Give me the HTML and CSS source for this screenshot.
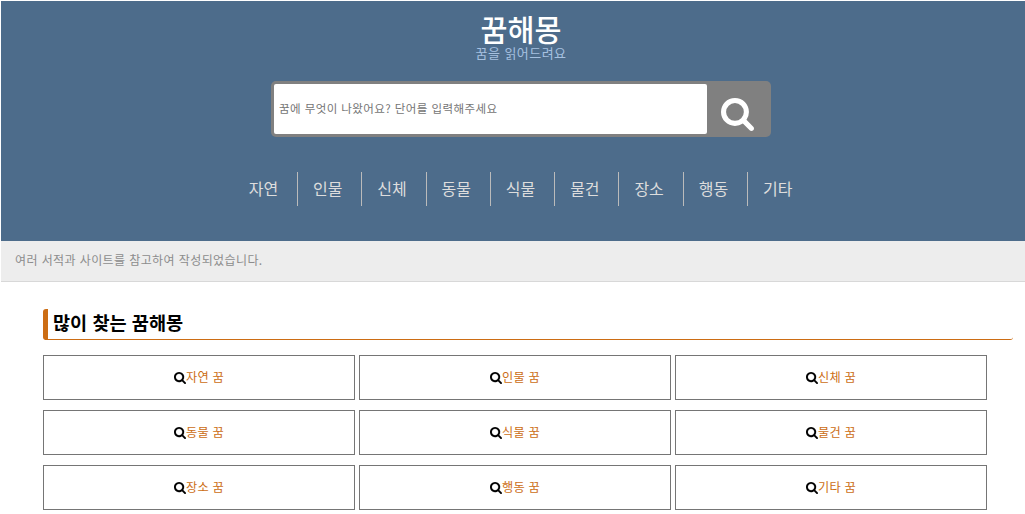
FILE: index.html
```html
<!DOCTYPE html>
<html lang="ko">
<head>
<meta charset="utf-8">
<title>꿈해몽</title>
<link rel="stylesheet" href="styles.css">
</head>
<body>
<svg class="sprite" aria-hidden="true">
  <symbol id="search" viewBox="0 128 1664 1664" overflow="visible"><path d="M1152 832q0-185-131.5-316.5T704 384 387.5 515.5 256 832t131.5 316.5T704 1280t316.5-131.5T1152 832zm512 832q0 52-38 90t-90 38q-54 0-90-38l-343-342q-179 124-399 124-143 0-273.5-55.5t-225-150-150-225T0 832t55.5-273.5 150-225 225-150T704 128t273.5 55.5 225 150 150 225T1408 832q0 220-124 399l343 343q37 37 37 90z"/></symbol>
</svg>
<header class="header">
  <h1 class="title">꿈해몽</h1>
  <p class="subtitle">꿈을 읽어드려요</p>
  <form class="search">
    <input class="search-input" type="text" placeholder="꿈에 무엇이 나왔어요? 단어를 입력해주세요">
    <button class="search-button" type="button" aria-label="검색"><svg class="search-icon"><use href="#search"/></svg></button>
  </form>
  <nav class="nav">
    <a class="nav-item">자연</a>
    <a class="nav-item">인물</a>
    <a class="nav-item">신체</a>
    <a class="nav-item">동물</a>
    <a class="nav-item">식물</a>
    <a class="nav-item">물건</a>
    <a class="nav-item">장소</a>
    <a class="nav-item">행동</a>
    <a class="nav-item">기타</a>
  </nav>
</header>
<p class="notice">여러 서적과 사이트를 참고하여 작성되었습니다.</p>
<main class="main">
  <h2 class="heading">많이 찾는 꿈해몽</h2>
  <div class="cards">
    <a class="card"><svg class="card-icon"><use href="#search"/></svg><span>자연 꿈</span></a>
    <a class="card"><svg class="card-icon"><use href="#search"/></svg><span>인물 꿈</span></a>
    <a class="card"><svg class="card-icon"><use href="#search"/></svg><span>신체 꿈</span></a>
    <a class="card"><svg class="card-icon"><use href="#search"/></svg><span>동물 꿈</span></a>
    <a class="card"><svg class="card-icon"><use href="#search"/></svg><span>식물 꿈</span></a>
    <a class="card"><svg class="card-icon"><use href="#search"/></svg><span>물건 꿈</span></a>
    <a class="card"><svg class="card-icon"><use href="#search"/></svg><span>장소 꿈</span></a>
    <a class="card"><svg class="card-icon"><use href="#search"/></svg><span>행동 꿈</span></a>
    <a class="card"><svg class="card-icon"><use href="#search"/></svg><span>기타 꿈</span></a>
  </div>
</main>
</body>
</html>
```
FILE: styles.css
```css
* {
  box-sizing: border-box;
}

body {
  margin: 0;
  padding: 1px 0 0 1px;
  background: #fff;
  font-family: "Noto Sans CJK KR", sans-serif;
}

.sprite {
  display: none;
}

.header {
  display: flex;
  flex-direction: column;
  align-items: center;
  height: 240px;
  padding: 10px 0 0 16px;
  background: #4d6c8b;
}

.title {
  margin: 0;
  color: #fff;
  font-size: 29.3px;
  font-weight: 500;
  line-height: 34px;
}

.subtitle {
  margin: 0;
  color: #a6c1e0;
  font-size: 13px;
  letter-spacing: 0.45px;
  line-height: 15px;
}

.search {
  display: flex;
  width: 500px;
  height: 56px;
  margin: 21px 0 0;
  padding: 3px;
  border-radius: 5px;
  background: #808080;
}

.search-input {
  width: 433px;
  height: 50px;
  padding: 0 5px 2px;
  border: 0;
  border-radius: 2px;
  background: #fff;
  font-family: inherit;
  font-size: 11.5px;
  letter-spacing: 0.42px;
}

.search-input::placeholder {
  color: #757575;
}

.search-button {
  display: flex;
  padding: 14px 0 0 14px;
  border: 0;
  background: none;
}

.search-icon {
  width: 33px;
  height: 33px;
  fill: #fff;
}

.nav {
  display: flex;
  margin: 35px 0 0 4px;
}

.nav-item {
  width: 64.28px;
  height: 34px;
  padding-left: 15px;
  border-right: 1px solid #bbb;
  color: #ddd;
  font-size: 16px;
  line-height: 32px;
}

.nav-item:last-child {
  border-right: 0;
}

.notice {
  height: 41px;
  margin: 0;
  padding-left: 14px;
  border-bottom: 1px solid #d8d8d8;
  background: #ededed;
  color: #8c8c8c;
  font-size: 12px;
  letter-spacing: 0.4px;
  line-height: 38px;
}

.main {
  padding: 27px 12px 0 42px;
}

.heading {
  height: 31px;
  margin: 0;
  padding-left: 5px;
  border-bottom: 1px solid #cc6d14;
  border-left: 5px solid #cc6d14;
  border-radius: 3px;
  color: #000;
  font-size: 18.6px;
  font-weight: 700;
  line-height: 25px;
}

.cards {
  display: grid;
  grid-template-columns: repeat(3, 312px);
  grid-auto-rows: 45px;
  gap: 10px 4px;
  margin-top: 15px;
}

.card {
  display: flex;
  align-items: center;
  justify-content: center;
  padding-bottom: 1px;
  border: 1px solid #757575;
  color: #cc6d14;
  font-size: 12.2px;
  letter-spacing: 0.25px;
  line-height: 18px;
}

.card-icon {
  width: 12px;
  height: 12px;
  margin-top: 2px;
  fill: #000;
  stroke: #000;
  stroke-width: 20px;
}
```
